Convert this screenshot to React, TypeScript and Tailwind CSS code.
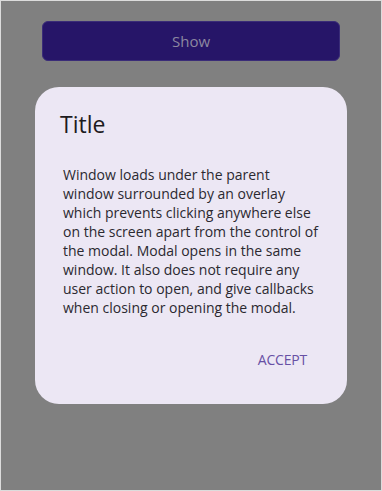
import React from "react";

const lines = [
  "Window loads under the parent",
  "window surrounded by an overlay",
  "which prevents clicking anywhere else",
  "on the screen apart from the control of",
  "the modal. Modal opens in the same",
  "window. It also does not require any",
  "user action to open, and give callbacks",
  "when closing or opening the modal.",
];

export default function App() {
  return (
    <div
      className="w-[382px] h-[491px] bg-[#808080] border border-[#dcdcdc] overflow-hidden"
      style={{ fontFamily: '"Open Sans", "Liberation Sans", sans-serif' }}
    >
      <div className="pt-[20px] px-[41px]">
        <button className="w-full h-[40px] rounded-[6px] bg-[#261568] border border-[#3a2c78] text-[15px] text-[#8c88a0] flex items-center justify-center">
          Show
        </button>
      </div>
      <div className="mx-[34px] mt-[26px] h-[317px] rounded-[24px] bg-[#ece7f4] flex flex-col pl-[24px] pr-[24px] pt-[22px]">
        <h2 className="text-[23px] leading-[30px] text-[#1d1b20] ml-[1px]">Title</h2>
        <p className="mt-[26px] ml-[4px] text-[14px] leading-[19px] text-[#2b2930] whitespace-nowrap">
          {lines.map((l, i) => (
            <React.Fragment key={i}>
              {l}
              {i < lines.length - 1 && <br />}
            </React.Fragment>
          ))}
        </p>
        <div className="flex justify-end mt-[33px] pr-[16px]">
          <button className="text-[14px] leading-[20px] text-[#6750a4] tracking-[-0.2px]">ACCEPT</button>
        </div>
      </div>
    </div>
  );
}
